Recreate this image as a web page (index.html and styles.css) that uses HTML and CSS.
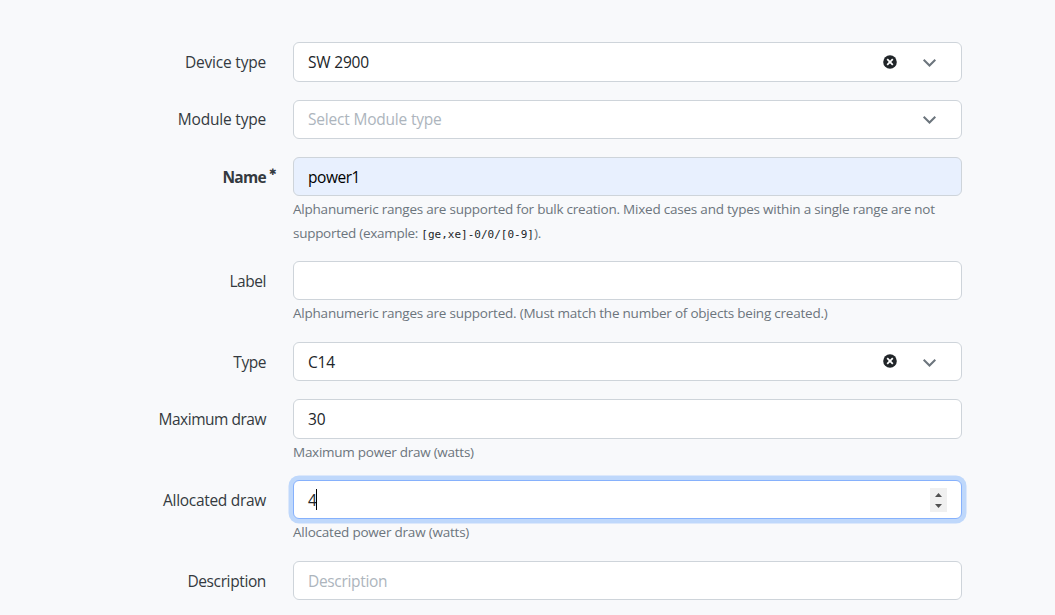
FILE: index.html
```html
<!DOCTYPE html>
<html lang="en">
<head>
<meta charset="utf-8">
<title>Power port template</title>
<link rel="stylesheet" href="styles.css">
</head>
<body>
<form class="form">
  <div class="row row-device">
    <div class="label">Device type</div>
    <div class="field"><div class="control tall"><span class="value">SW 2900</span>
      <svg class="clear" viewBox="0 0 14 14"><circle cx="7" cy="7" r="6.8"/><path d="M4.2 4.2l5.6 5.6M9.8 4.2L4.2 9.8"/></svg>
      <svg class="chevron" viewBox="0 0 14 10"><path d="M1.7 1.7L7.5 7.5l5.8-5.8"/></svg></div></div>
  </div>
  <div class="row row-module">
    <div class="label">Module type</div>
    <div class="field"><div class="control"><span class="value placeholder">Select Module type</span>
      <svg class="chevron" viewBox="0 0 14 10"><path d="M1.7 1.7L7.5 7.5l5.8-5.8"/></svg></div></div>
  </div>
  <div class="row row-name">
    <div class="label required">Name<span class="star">✱</span></div>
    <div class="field"><div class="control autofill"><span class="value">power1</span></div>
      <div class="help">Alphanumeric ranges are supported for bulk creation. Mixed cases and types within a single range are not<br><span class="example">supported (example: </span><code>[ge,xe]-0/0/[0-9]</code>).</div></div>
  </div>
  <div class="row row-label">
    <div class="label">Label</div>
    <div class="field"><div class="control"></div>
      <div class="help">Alphanumeric ranges are supported. (Must match the number of objects being created.)</div></div>
  </div>
  <div class="row row-type">
    <div class="label">Type</div>
    <div class="field"><div class="control"><span class="value">C14</span>
      <svg class="clear raised" viewBox="0 0 14 14"><circle cx="7" cy="7" r="6.8"/><path d="M4.2 4.2l5.6 5.6M9.8 4.2L4.2 9.8"/></svg>
      <svg class="chevron" viewBox="0 0 14 10"><path d="M1.7 1.7L7.5 7.5l5.8-5.8"/></svg></div></div>
  </div>
  <div class="row row-max">
    <div class="label">Maximum draw</div>
    <div class="field"><div class="control tall"><span class="value">30</span></div>
      <div class="help">Maximum power draw (watts)</div></div>
  </div>
  <div class="row row-alloc">
    <div class="label">Allocated draw</div>
    <div class="field"><div class="control focused"><span class="value">4</span><span class="caret"></span>
      <svg class="spinner" viewBox="0 0 17 24"><path d="M5 9h7L8.5 5zM5 16h7l-3.5 4z"/></svg></div>
      <div class="help">Allocated power draw (watts)</div></div>
  </div>
  <div class="row row-description">
    <div class="label">Description</div>
    <div class="field"><div class="control"><span class="value placeholder">Description</span></div></div>
  </div>
</form>
</body>
</html>
```
FILE: styles.css
```css
* { box-sizing: border-box; }
body {
  margin: 0;
  height: 615px;
  overflow: hidden;
  background: #f8f9fb;
  color: #343a40;
  font: 400 15.5px/24px "Open Sans", "Noto Sans", sans-serif;
}
.form {
  display: grid;
  grid-template-rows: 58px 57px 104px 81px 57px 81px 81px 54px;
  padding-top: 42px;
}
.row {
  display: grid;
  grid-template-columns: 266px 669px;
  column-gap: 27px;
}
.label { height: 40px; line-height: 41px; text-align: right; white-space: nowrap; letter-spacing: -0.2px; }
.row-module .label { line-height: 39px; }
.row-label .label, .row-type .label { letter-spacing: -0.45px; }
.row-max .label { letter-spacing: -0.48px; }
.row-alloc .label { letter-spacing: -0.3px; }
.row-description .label { letter-spacing: -0.38px; }
.row .required { font-weight: 700; display: flex; justify-content: flex-end; letter-spacing: -0.7px; }
.star { width: 0; font: 9px/31px "DejaVu Sans", sans-serif; text-indent: 3px; letter-spacing: 0; }
.control {
  display: flex;
  align-items: center;
  height: 39px;
  padding: 0 14px;
  background: #fff;
  border: 1px solid #ced4da;
  border-radius: 6px;
  color: #212529;
}
.tall { height: 40px; }
.autofill { background: #e8f0fe; color: #000; }
.focused { border-color: #86b1fc; box-shadow: 0 0 0 4.5px #bfd8fb; }
.value { white-space: pre; letter-spacing: -0.2px; }
.row-module .value { margin-top: -1px; }
.autofill .value { letter-spacing: -0.45px; }
.row-description .value { letter-spacing: -0.33px; }
.placeholder { color: #adb5bd; }
.clear { width: 14px; height: 14px; margin-left: auto; margin-right: 25px; fill: #212529; }
.clear path { stroke: #fff; stroke-width: 1.8; }
.raised { margin-bottom: 2px; }
.chevron { width: 14px; height: 10px; margin: 2px 11px 0 0; fill: none; stroke: #6c757d; stroke-width: 2; }
.row-module .chevron { margin: 1px 11px 0 auto; }
.caret { width: 1px; height: 21px; margin-left: -1px; background: #000; }
.spinner { width: 17px; height: 24px; margin-left: auto; background: #f0f0f0; fill: #505050; }
.help { padding-top: 1px; color: #6c757d; font-size: 13.5px; line-height: 24px; white-space: nowrap; letter-spacing: -0.22px; }
.example { letter-spacing: -0.28px; }
.row-max .help { letter-spacing: -0.26px; }
.help code { color: #212529; font: 11px/20px "DejaVu Sans Mono", monospace; letter-spacing: 0; }
```
